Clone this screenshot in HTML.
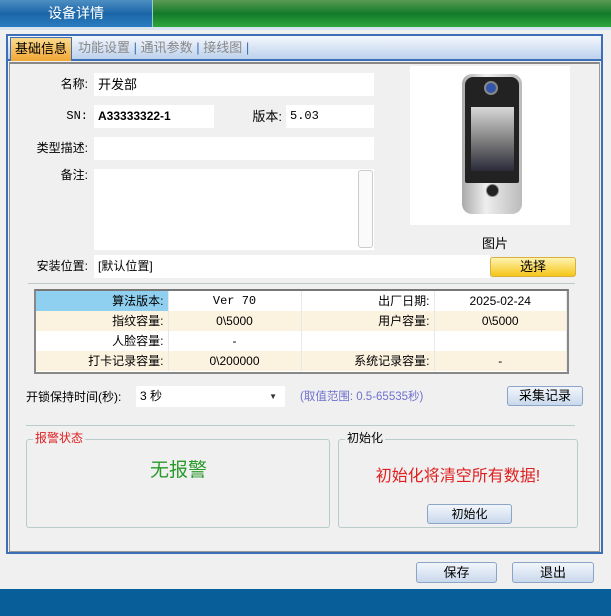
<!DOCTYPE html>
<html><head><meta charset="utf-8"><style>
*{box-sizing:border-box;margin:0;padding:0}
body{width:611px;height:616px;overflow:hidden;background:#f0f0f0;font-family:"Liberation Sans","Noto Sans CJK SC",sans-serif;font-size:12px;color:#000;position:relative}
.a{position:absolute}
.inp{position:absolute;background:#fff;height:23px;line-height:23px;padding-left:4px}
.lbl{position:absolute;text-align:right;line-height:23px}
.btn{position:absolute;border:1px solid #8aa5c8;border-radius:3px;background:linear-gradient(#f2f6fb,#c9d8ec);text-align:center;font-size:13px}
table{border-collapse:collapse}
td{height:20px;font-size:12px;padding:0 4px;border-right:1px solid #e8e8e8;line-height:20px}
</style></head><body>
<div class="a" style="left:0;top:0;width:611px;height:27px;background:linear-gradient(#5a9a55,#137a2a 50%,#2fa63c)"></div>
<div class="a" style="left:0;top:0;width:153px;height:27px;background:linear-gradient(#4d8fc2,#1c66a8 50%,#2a7cc0);border-right:1px solid #9cc;color:#fff;font-size:14px;line-height:27px;text-align:center">设备详情</div>
<div class="a" style="left:0;top:27px;width:611px;height:3px;background:#d7e3ef"></div>
<div class="a" style="left:6px;top:34px;width:597px;height:520px;border:2px solid #3d6fb8;background:#f0f0f0"></div>
<div class="a" style="left:8px;top:36px;width:593px;height:25px;background:linear-gradient(#f4f8fd,#bcd1ec);border-bottom:2px solid #3d6fb8"></div>
<div class="a" style="left:10px;top:37px;width:62px;height:24px;background:linear-gradient(#fbd98c,#f2a735);border:1px solid #3d6fb8;border-bottom:none;font-size:13px;line-height:22px;text-align:center">基础信息</div>
<div class="a" style="left:78px;top:38px;font-size:13px;color:#888;line-height:20px">功能设置 <span style="color:#3d6fb8">|</span> 通讯参数 <span style="color:#3d6fb8">|</span> 接线图 <span style="color:#3d6fb8">|</span></div>
<div class="a" style="left:9px;top:62px;width:591px;height:490px;border:1px solid #999;border-top:2px solid #888"></div>

<div class="lbl" style="left:20px;top:73px;width:68px">名称:</div>
<div class="inp" style="left:94px;top:73px;width:280px;font-size:13px">开发部</div>
<div class="lbl" style="left:20px;top:105px;width:68px;font-family:'Liberation Mono',monospace">SN:</div>
<div class="inp" style="left:94px;top:105px;width:120px;font-weight:bold;font-size:12px">A33333322-1</div>
<div class="lbl" style="left:230px;top:105px;width:52px;font-size:13px">版本:</div>
<div class="inp" style="left:286px;top:105px;width:88px;font-family:'Liberation Mono',monospace">5.03</div>
<div class="lbl" style="left:20px;top:137px;width:68px">类型描述:</div>
<div class="inp" style="left:94px;top:137px;width:280px"></div>
<div class="lbl" style="left:20px;top:164px;width:68px">备注:</div>
<div class="inp" style="left:94px;top:169px;width:280px;height:81px"></div>
<div class="a" style="left:358px;top:170px;width:15px;height:78px;border:1px solid #ccc;border-radius:3px;background:#fafafa"></div>
<div class="lbl" style="left:20px;top:255px;width:68px">安装位置:</div>
<div class="inp" style="left:94px;top:255px;width:396px">[默认位置]</div>
<div class="btn" style="left:490px;top:257px;width:86px;height:20px;line-height:18px;background:linear-gradient(#fff3b0,#f5c518);border-color:#d8b040">选择</div>
<div class="a" style="left:410px;top:66px;width:160px;height:159px;background:#fff"></div>
<div class="a" style="left:462px;top:74px;width:60px;height:140px;border-radius:10px;background:linear-gradient(90deg,#aaa,#eee 40%,#bbb);"></div>
<div class="a" style="left:465px;top:77px;width:54px;height:106px;border-radius:8px 8px 2px 2px;background:#222"></div>
<div class="a" style="left:484px;top:81px;width:14px;height:14px;border-radius:50%;background:#35a;border:2px solid #888"></div>
<div class="a" style="left:471px;top:107px;width:43px;height:64px;background:linear-gradient(#d8d8d8,#7a7a7a 55%,#2a2a3a)"></div>
<div class="a" style="left:486px;top:184px;width:13px;height:13px;border-radius:50%;background:#222;border:1px solid #888"></div>
<div class="a" style="left:482px;top:233px;font-size:13px">图片</div>

<div class="a" style="left:28px;top:283px;width:547px;height:1px;background:#b8cccc"></div>
<div class="a" style="left:34px;top:289px;width:535px;height:85px;border:2px solid #888;border-top-color:#777;background:#fff">
<table style="width:531px">
<tr><td style="width:132px;background:#fff;text-align:right;position:relative"><span style="position:absolute;left:0;top:0;width:44px;height:20px;background:#8fd0f0"></span><span style="position:relative;background:#8fd0f0;padding-left:50px;margin-right:-4px;padding-right:4px;line-height:20px;display:inline-block">算法版本:</span></td><td style="width:133px;text-align:center;font-family:'Liberation Mono',monospace">Ver 70</td><td style="width:133px;text-align:right">出厂日期:</td><td style="text-align:center">2025-02-24</td></tr>
<tr style="background:#fcf2e0"><td style="text-align:right">指纹容量:</td><td style="text-align:center">0\5000</td><td style="text-align:right">用户容量:</td><td style="text-align:center">0\5000</td></tr>
<tr><td style="text-align:right">人脸容量:</td><td style="text-align:center">-</td><td></td><td></td></tr>
<tr style="background:#fcf2e0"><td style="text-align:right">打卡记录容量:</td><td style="text-align:center">0\200000</td><td style="text-align:right">系统记录容量:</td><td style="text-align:center">-</td></tr>
</table></div>

<div class="a" style="left:26px;top:388px;line-height:18px">开锁保持时间(秒):</div>
<div class="inp" style="left:136px;top:386px;width:149px;height:21px;line-height:21px">3 秒<span style="position:absolute;right:8px;font-size:8px;color:#333">▼</span></div>
<div class="a" style="left:300px;top:388px;line-height:18px;color:#7070d0;font-size:11.5px">(取值范围: 0.5-65535秒)</div>
<div class="btn" style="left:507px;top:386px;width:76px;height:20px;line-height:18px">采集记录</div>
<div class="a" style="left:26px;top:425px;width:549px;height:1px;background:#b8cccc"></div>

<div class="a" style="left:26px;top:439px;width:304px;height:89px;border:1px solid #b8cccc;border-radius:3px"></div>
<div class="a" style="left:33px;top:431px;background:#f0f0f0;color:#e02020;padding:0 2px;line-height:15px">报警状态</div>
<div class="a" style="left:150px;top:455px;color:#2a9a2a;font-size:19px">无报警</div>
<div class="a" style="left:338px;top:439px;width:240px;height:89px;border:1px solid #b8cccc;border-radius:3px"></div>
<div class="a" style="left:345px;top:431px;background:#f0f0f0;padding:0 2px;line-height:15px">初始化</div>
<div class="a" style="left:338px;top:462px;width:240px;text-align:center;color:#e02020;font-size:16px">初始化将清空所有数据!</div>
<div class="btn" style="left:427px;top:504px;width:85px;height:20px;line-height:18px;font-size:12px">初始化</div>

<div class="btn" style="left:416px;top:562px;width:81px;height:21px;line-height:19px">保存</div>
<div class="btn" style="left:512px;top:562px;width:82px;height:21px;line-height:19px">退出</div>
<div class="a" style="left:0;top:589px;width:611px;height:27px;background:#085e98"></div>
</body></html>
